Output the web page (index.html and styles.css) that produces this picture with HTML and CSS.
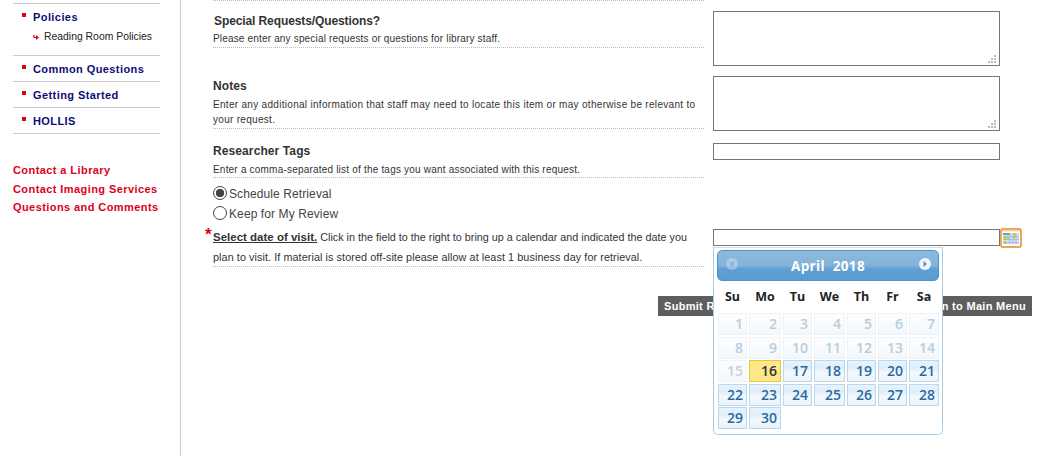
FILE: index.html
```html
<!DOCTYPE html>
<html lang="en">
<head>
<meta charset="utf-8">
<title>Request</title>
<link rel="stylesheet" href="styles.css">
</head>
<body>
<div class="page">
  <aside class="side">
    <ul class="nav">
      <li class="nav-item nav-first"><a class="nav-link">Policies</a>
        <div class="sub"><svg class="sub-arrow" width="6" height="6" viewBox="0 0 6 6"><path d="M0 1h1.500v2H3V1l3 2.500L3 6V4H.5z" fill="#d0021b"/></svg>Reading Room Policies</div>
      </li>
      <li class="nav-item"><a class="nav-link">Common Questions</a></li>
      <li class="nav-item"><a class="nav-link">Getting Started</a></li>
      <li class="nav-item"><a class="nav-link">HOLLIS</a></li>
    </ul>
    <div class="contact">
      <a>Contact a Library</a>
      <a>Contact Imaging Services</a>
      <a>Questions and Comments</a>
    </div>
  </aside>
  <main class="main">
    <div class="row row-special">
      <div class="label-col">
        <h3 class="title title-special">Special Requests/Questions?</h3>
        <p class="help">Please enter any special requests or questions for library staff.</p>
      </div>
      <div class="field-col"><div class="textarea"><svg class="grip" width="9" height="9" viewBox="0 0 9 9"><path d="M6 0h2v2H6zM3 3h2v2H3zM6 3h2v2H6zM0 6h2v2H0zM3 6h2v2H3zM6 6h2v2H6z" fill="#bbb"/></svg></div></div>
    </div>
    <div class="row row-notes">
      <div class="label-col">
        <h3 class="title">Notes</h3>
        <p class="help">Enter any additional information that staff may need to locate this item or may otherwise be relevant to your request.</p>
      </div>
      <div class="field-col"><div class="textarea"><svg class="grip" width="9" height="9" viewBox="0 0 9 9"><path d="M6 0h2v2H6zM3 3h2v2H3zM6 3h2v2H6zM0 6h2v2H0zM3 6h2v2H3zM6 6h2v2H6z" fill="#bbb"/></svg></div></div>
    </div>
    <div class="row row-tags">
      <div class="label-col">
        <h3 class="title">Researcher Tags</h3>
        <p class="help">Enter a comma-separated list of the tags you want associated with this request.</p>
      </div>
      <div class="field-col"><div class="input"></div></div>
    </div>
    <div class="radios">
      <div class="radio-row"><span class="radio radio-on"></span>Schedule Retrieval</div>
      <div class="radio-row"><span class="radio"></span>Keep for My Review</div>
    </div>
    <div class="row row-date">
      <div class="label-col">
        <p class="date-help"><span class="star">*</span><b>Select date of visit.</b> Click in the field to the right to bring up a calendar and indicated the date you <span class="date-rest">plan to visit. If material is stored off-site please allow at least 1 business day for retrieval.</span></p>
      </div>
      <div class="field-col date-field">
        <div class="input"></div>
        <svg class="cal-icon" width="22" height="20" viewBox="0 0 22 20">
          <rect x="1" y="1" width="20" height="18" rx="1.500" fill="#fff" stroke="#e8862e" stroke-width="1.500"/>
          <rect x="2" y="2" width="18" height="1.500" fill="#f8d9a8"/>
          <rect x="3" y="5" width="16" height="11" fill="#d5e1f3"/>
          <rect x="3" y="5" width="7" height="2" fill="#7d93c4"/>
          <path d="M10 5v11M13 5v11M16 5v11M3 8.500h16M3 11.500h16M3 14.500h16" stroke="#a9bcdc" stroke-width="1"/>
          <path d="M4 8h2v4H4zM4 13h2v3H4zM13.500 5h2v5h-2zM7 9h2v2H7z" fill="#a6d13a"/>
        </svg>
      </div>
    </div>
    <div class="actions">
      <a class="btn">Submit Request</a>
      <a class="btn">Return to Main Menu</a>
    </div>
    <div class="calendar">
      <div class="cal-head">
        <svg class="cal-nav cal-prev" width="12" height="12" viewBox="0 0 12 12"><circle cx="6" cy="6" r="6" fill="#fff"/><path d="M7.500 2.800 4 6l3.500 3.200z" fill="#7fa9d0"/></svg>
        <span class="cal-title">April&nbsp; 2018</span>
        <svg class="cal-nav cal-next" width="12" height="12" viewBox="0 0 12 12"><circle cx="6" cy="6" r="6" fill="#eef5fb"/><path d="M4.500 2.800 8 6 4.500 9.200z" fill="#5f98c9"/></svg>
      </div>
      <div class="cal-dows">
        <span class="dow">Su</span><span class="dow">Mo</span><span class="dow">Tu</span><span class="dow">We</span><span class="dow">Th</span><span class="dow">Fr</span><span class="dow">Sa</span>
      </div>
      <div class="cal-grid">
        <span class="day off">1</span><span class="day off">2</span><span class="day off">3</span><span class="day off">4</span><span class="day off">5</span><span class="day off">6</span><span class="day off">7</span>
        <span class="day off">8</span><span class="day off">9</span><span class="day off">10</span><span class="day off">11</span><span class="day off">12</span><span class="day off">13</span><span class="day off">14</span>
        <span class="day off past">15</span><span class="day today">16</span><span class="day">17</span><span class="day">18</span><span class="day">19</span><span class="day">20</span><span class="day">21</span>
        <span class="day">22</span><span class="day">23</span><span class="day">24</span><span class="day">25</span><span class="day">26</span><span class="day">27</span><span class="day">28</span>
        <span class="day">29</span><span class="day">30</span>
      </div>
    </div>
  </main>
</div>
</body>
</html>
```

FILE: styles.css
```css
* { box-sizing: border-box; }
html, body { margin: 0; padding: 0; background: #fff; }
body { width: 1039px; height: 456px; overflow: hidden; font-family: "Liberation Sans", Arial, sans-serif; color: #333; }
.page { display: flex; height: 456px; }
.side { width: 181px; flex: none; border-right: 1px solid #ccc; padding: 3px 20px 0 13px; }
.nav { list-style: none; margin: 0; padding: 0; width: 147px; border-top: 1px solid #ccc; }
.nav-item { border-bottom: 1px solid #ccc; height: 26px; padding: 6px 0 0 20px; position: relative; }
.nav-item::before { content: ""; position: absolute; left: 9px; top: 9px; width: 4px; height: 4px; background: #d8001c; }
.nav-first { height: 52px; }
.nav-link { font-size: 11px; line-height: 14px; font-weight: bold; color: #0c0c78; letter-spacing: .42px; display: block; }
.sub { font-size: 10.400px; line-height: 14px; color: #222; display: flex; align-items: center; margin: 6px 0 0 0; }
.sub-arrow { margin-right: 5px; }
.contact { margin-top: 29px; display: flex; flex-direction: column; }
.contact a { font-size: 11px; font-weight: bold; color: #dc0020; line-height: 14px; margin-bottom: 4.500px; letter-spacing: .42px; }
.main { flex: 1; position: relative; padding-left: 32px; }
.row { display: flex; width: 787px; }
.label-col { width: 491px; flex: none; margin-right: 9px; }
.row-special { height: 75px; }
.row-special .label-col { border-top: 1px dotted #bbb; height: 48px; padding-top: 12px; }
.row-special .help { margin-top: 2px; padding-bottom: 0; }
.row-notes { height: 66px; }
.row-notes .title { padding-top: 3px; }
.row-notes .help { line-height: 15px; margin-top: 3px; letter-spacing: .3px; }
.row-tags { height: 39px; }
.row-tags .title { padding-top: 2px; }
.row-tags .help { line-height: 15px; padding-bottom: 0; margin-top: 3px; letter-spacing: .2px; }
.title { margin: 0; font-size: 12px; line-height: 16px; font-weight: bold; color: #333; letter-spacing: .1px; }
.title-special { padding-left: 1px; letter-spacing: -.1px; }
.help { margin: 1px 0 0; font-size: 10px; line-height: 16px; color: #333; letter-spacing: .17px; border-bottom: 1px dotted #bbb; padding-bottom: 1px; }
.field-col { width: 287px; flex: none; }
.row-special .field-col { padding-top: 11px; }
.row-notes .field-col { padding-top: 1px; }
.row-tags .field-col { padding-top: 2px; }
.textarea { width: 287px; height: 55px; border: 1px solid #767676; position: relative; background: #fff; }
.grip { position: absolute; right: 2px; bottom: 1px; }
.input { width: 287px; height: 17px; border: 1px solid #767676; background: #fff; }
.radios { height: 48px; padding-top: 4px; }
.radio-row { display: flex; align-items: center; font-size: 12px; line-height: 20px; height: 20px; color: #444; letter-spacing: .1px; }
.radio { width: 14px; height: 14px; border-radius: 50%; border: 1px solid #444; margin: 0 2px 2px 0; background: #fff; flex: none; }
.radio-on { background: radial-gradient(circle, #444 0 4px, #fff 4.500px); }
.date-help { margin: -1px 0 0; height: 40px; font-size: 10.800px; line-height: 20px; color: #333; border-bottom: 1px dotted #bbb; position: relative; }
.date-help b { text-decoration: underline; font-size: 11.500px; }
.date-rest { letter-spacing: .08px; }
.star { position: absolute; left: -8px; top: -2px; color: #d8001c; font-size: 17px; font-weight: bold; line-height: 20px; }
.date-field { position: relative; padding-top: 1px; }
.cal-icon { position: absolute; left: 287px; top: 0; }
.actions { position: absolute; top: 296px; left: 477px; width: 374px; height: 20px; display: flex; justify-content: space-between; }
.btn { height: 20px; background: #5e5e5e; color: #fff; font-size: 11px; line-height: 20px; font-weight: bold; padding: 0 6px; white-space: nowrap; letter-spacing: .3px; }
.calendar { position: absolute; left: 532px; top: 247px; width: 230px; height: 188px; background: #fff; border: 1px solid #a9cbe2; border-top-color: #c9def0; border-radius: 0 0 5px 5px; padding: 2px 3px 3px; font-family: "Open Sans", "Liberation Sans", sans-serif; }
.cal-head { height: 31px; border: 1px solid #4a93d3; border-radius: 5px; background: linear-gradient(#8dbadd 0, #83b3d9 50%, #5f9fd3 62%, #5a9bd0 100%); position: relative; display: flex; align-items: center; justify-content: center; }
.cal-title { color: #fff; font-weight: bold; font-size: 13.500px; letter-spacing: .35px; }
.cal-nav { position: absolute; top: 7px; }
.cal-prev { left: 8px; opacity: .3; }
.cal-next { right: 7px; }
.cal-dows, .cal-grid { display: grid; grid-template-columns: 29px 32px 29px 31px 29px 29px 30px; column-gap: 2px; margin-left: 1px; width: 221px; }
.cal-dows { height: 32px; }
.dow { font-size: 12.500px; font-weight: bold; color: #222; text-align: center; line-height: 31px; }
.cal-grid { grid-auto-rows: 22px; row-gap: 1.500px; }
.day { border: 1px solid #bcd7ec; background: linear-gradient(#e8f2fb, #e0eef9 35%, #f4f9fd 60%, #e8f2fb); color: #2a6aa3; font-size: 14px; font-weight: 600; line-height: 19px; text-align: right; padding-right: 3px; }
.day.off { border-color: #edf3f8; background: linear-gradient(#fcfdfe, #f4f8fb); color: #b6cddf; }
.day.past { color: #c8d1d9; }
.day.today { background: #fce888; border-color: #e9c53a; color: #333; }
```
